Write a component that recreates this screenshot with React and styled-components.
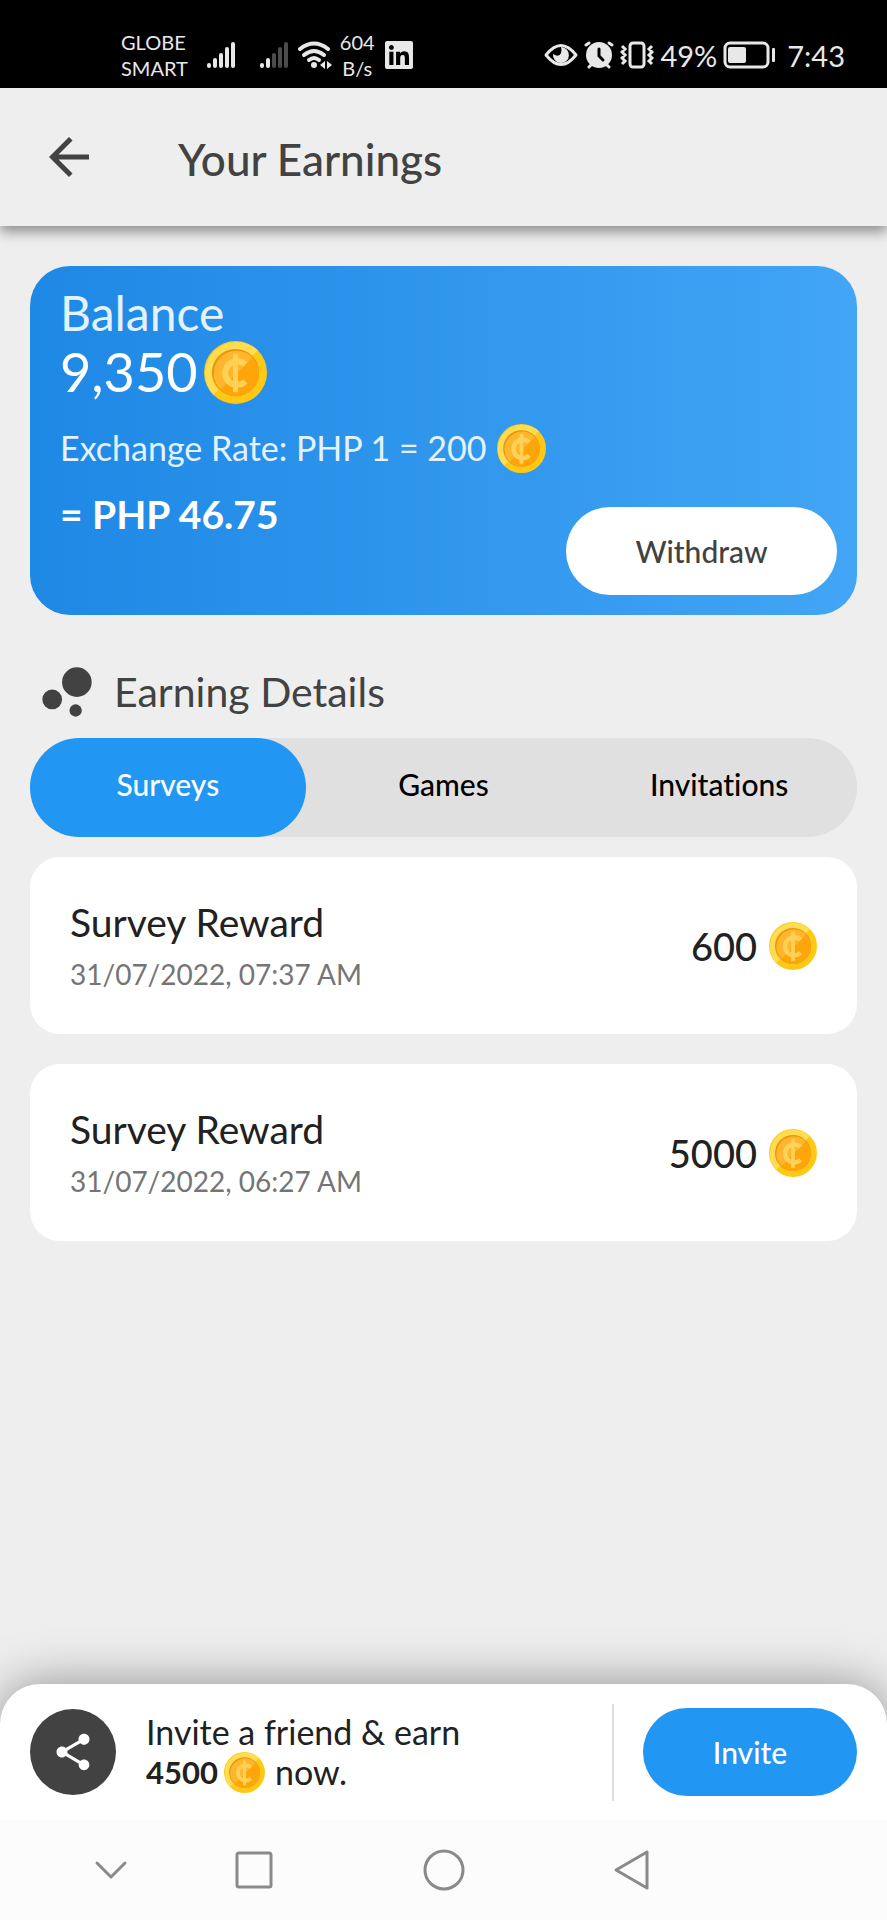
import React, { useState } from 'react';
import styled, { createGlobalStyle } from 'styled-components';
import { FaLinkedin } from 'react-icons/fa';
import { MdArrowBack, MdBubbleChart, MdShare } from 'react-icons/md';

const rewards = {
    Surveys: [
        { id: 1, title: 'Survey Reward', date: '31/07/2022, 07:37 AM', coins: 600 },
        { id: 2, title: 'Survey Reward', date: '31/07/2022, 06:27 AM', coins: 5000 },
    ],
    Games: [],
    Invitations: [],
};

const Coin = ({ size }) => (
    <CoinStyle $size={size} viewBox="0 0 64 64" aria-label="coins" role="img">
        <circle cx="32" cy="32" r="32" fill="#fdc916" />
        <path d="M9.4 54.6 A32 32 0 0 1 54.6 9.4 Z" fill="#ffdc52" />
        <circle cx="32" cy="32" r="24" fill="#e8960c" />
        <circle cx="33" cy="33" r="23" fill="#fda50a" />
        <path d="M16.7 49.3 A23 23 0 0 1 49.3 16.7 Z" fill="#ffb52e" />
        <path d="M42 24 A12 12 0 1 0 42 41" fill="none" stroke="#ffd257" strokeWidth="6" />
        <path d="M32 13 V52" fill="none" stroke="#ffd257" strokeWidth="5" />
    </CoinStyle>
);

const Signal = ({ level }) => (
    <svg width="30" height="28" viewBox="0 0 30 28" aria-hidden="true">
        {[5, 10, 15, 21, 26].map((h, i) => (
            <rect key={h} x={i * 6} y={27 - h} width="4" height={h} rx="2" fill={i < level ? '#e8e8e8' : '#4c4c4c'} />
        ))}
    </svg>
);

const Wifi = () => (
    <svg width="34" height="28" viewBox="0 0 34 28" fill="none" stroke="#e8e8e8" strokeWidth="4" aria-hidden="true">
        <path d="M2 8 Q16 -3 30 8" strokeLinecap="round" />
        <path d="M6 14 Q16 6 26 14" strokeLinecap="round" />
        <path d="M11 19 Q16 15 21 19" strokeLinecap="round" />
        <circle cx="16" cy="24" r="3" fill="#e8e8e8" stroke="none" />
        <path d="M27 20 v8 l-5 -4 z M29 20 v8 l5 -4 z" fill="#e8e8e8" stroke="none" />
    </svg>
);

const Eye = () => (
    <svg width="34" height="24" viewBox="0 0 34 24" aria-hidden="true">
        <path d="M2 12 Q17 -7 32 12 Q17 31 2 12 Z" fill="none" stroke="#e8e8e8" strokeWidth="3" strokeLinejoin="round" />
        <path d="M17 4 A8 8 0 1 1 9 11 Q15 15 17 10 Q18 7 17 4 Z" fill="#e8e8e8" />
    </svg>
);

const Alarm = () => (
    <svg width="30" height="28" viewBox="0 0 30 28" fill="none" stroke="#e8e8e8" strokeWidth="3" strokeLinecap="round" aria-hidden="true">
        <circle cx="15" cy="14" r="13" fill="#e8e8e8" stroke="none" />
        <path d="M2 4 L5 2 M28 4 L25 2 M5 26 L8 23 M25 26 L22 23" />
        <path d="M15 8 V15 L19 19" stroke="#000" />
    </svg>
);

const Vibrate = () => (
    <svg width="34" height="28" viewBox="0 0 34 28" fill="none" stroke="#e8e8e8" strokeWidth="3" aria-hidden="true">
        <rect x="10" y="2" width="14" height="24" rx="3" />
        <path d="M2 5 l3 3 l-3 3 l3 3 l-3 3 l3 3 l-3 3 M32 5 l-3 3 l3 3 l-3 3 l3 3 l-3 3 l3 3" />
    </svg>
);

const Battery = () => (
    <svg width="52" height="28" viewBox="0 0 52 28" aria-hidden="true">
        <rect x="2" y="2" width="43" height="24" rx="5" fill="none" stroke="#e8e8e8" strokeWidth="3" />
        <rect x="5" y="6" width="18" height="16" rx="2" fill="#e8e8e8" />
        <rect x="49" y="7" width="3" height="14" rx="1" fill="#e8e8e8" />
    </svg>
);

const Reward = ({ title, date, coins }) => (
    <RewardStyle>
        <div>
            <h3 className="reward__title">{title}</h3>
            <p className="reward__date">{date}</p>
        </div>
        <p className="reward__coins">
            {coins}
            <Coin size={48} />
        </p>
    </RewardStyle>
);

const App = () => {
    const [tab, setTab] = useState('Surveys');

    return (
        <Page>
            <GlobalStyle />
            <StatusBar>
                <StatusGroup $gap={8}>
                    <Small>GLOBE<br />SMART</Small>
                    <StatusIcons>
                        <Signal level={5} />
                        <Signal level={2} />
                    </StatusIcons>
                    <Wifi />
                    <Small $center>604<br />B/s</Small>
                    <FaLinkedin size={32} />
                </StatusGroup>
                <StatusGroup $gap={6}>
                    <Eye />
                    <Alarm />
                    <Vibrate />
                    <span>49%</span>
                    <Battery />
                    <Clock>7:43</Clock>
                </StatusGroup>
            </StatusBar>

            <Header>
                <BackButton type="button" aria-label="Back"><MdArrowBack size={60} /></BackButton>
                <h1>Your Earnings</h1>
            </Header>

            <Main>
                <BalanceCard>
                    <BalanceLabel>Balance</BalanceLabel>
                    <BalanceAmount>9,350<Coin size={63} /></BalanceAmount>
                    <Rate>Exchange Rate: PHP 1 = 200<Coin size={49} /></Rate>
                    <BalanceFooter>
                        <strong>= PHP 46.75</strong>
                        <PillButton type="button" $width={271}>Withdraw</PillButton>
                    </BalanceFooter>
                </BalanceCard>

                <SectionTitle>
                    <MdBubbleChart size={74} />
                    Earning Details
                </SectionTitle>

                <Tabs role="tablist">
                    {Object.keys(rewards).map((name) => (
                        <Tab key={name} type="button" role="tab" aria-selected={tab === name} $active={tab === name} onClick={() => setTab(name)}>
                            {name}
                        </Tab>
                    ))}
                </Tabs>

                <RewardList>
                    {rewards[tab].map((reward) => <Reward key={reward.id} {...reward} />)}
                </RewardList>
            </Main>

            <InviteBar>
                <ShareBadge><MdShare size={44} /></ShareBadge>
                <InviteText>
                    Invite a friend &amp; earn
                    <span><strong>4500</strong><Coin size={41} /><em>now.</em></span>
                </InviteText>
                <PillButton type="button" $primary $width={214}>Invite</PillButton>
            </InviteBar>

            <NavBar>
                <NavButton type="button" aria-label="Hide keyboard">
                    <svg width="42" height="42" viewBox="0 0 42 42"><path d="M7 14 L21 28 L35 14" /></svg>
                </NavButton>
                <NavButton type="button" aria-label="Recent apps">
                    <svg width="42" height="42" viewBox="0 0 42 42"><rect x="4" y="4" width="34" height="34" rx="2" /></svg>
                </NavButton>
                <NavButton type="button" aria-label="Home">
                    <svg width="42" height="42" viewBox="0 0 42 42"><circle cx="21" cy="21" r="19" /></svg>
                </NavButton>
                <NavButton type="button" aria-label="Back">
                    <svg width="42" height="42" viewBox="0 0 42 42"><path d="M34 3 V39 L3 21 Z" /></svg>
                </NavButton>
            </NavBar>
        </Page>
    );
};

const GlobalStyle = createGlobalStyle`
* {
    box-sizing: border-box;
}
body {
    margin: 0;
    background: #eee;
    font-family: Lato, "Liberation Sans", sans-serif;
    font-variant-ligatures: none;
}
h1, h2, h3, p {
    margin: 0;
    font-weight: 400;
}
button {
    border: 0;
    font-family: inherit;
    font-variant-ligatures: none;
    cursor: pointer;
}
svg {
    flex-shrink: 0;
}
`

const CoinStyle = styled.svg`
width: ${(props) => props.$size}px;
height: ${(props) => props.$size}px;
`

const Page = styled.div`
min-height: 100vh;
display: flex;
flex-direction: column;
background: #eee;
color: #212121;
`

const StatusBar = styled.div`
height: 88px;
padding: 22px 42px 0 121px;
display: flex;
justify-content: space-between;
align-items: center;
background: #000;
color: #e8e8e8;
font-size: 29px;
`

const StatusGroup = styled.div`
display: flex;
align-items: center;
gap: ${(props) => props.$gap}px;
`

const StatusIcons = styled.div`
display: flex;
gap: 23px;
margin-left: 11px;
`

const Small = styled.span`
font-size: 20px;
line-height: 26px;
text-align: ${(props) => (props.$center ? 'center' : 'left')};
`

const Clock = styled.span`
margin-left: 6px;
`

const Header = styled.header`
height: 138px;
padding: 0 39px;
display: flex;
align-items: center;
gap: 79px;
background: #eee;
color: #424242;
box-shadow: 0 6px 12px rgba(0, 0, 0, 0.4);

h1 {
    padding-top: 4px;
    font-size: 44px;
    font-weight: 500;
}
`

const BackButton = styled.button`
display: flex;
padding: 0;
background: none;
color: inherit;
`

const Main = styled.main`
flex: 1;
padding: 40px 30px;
`

const BalanceCard = styled.section`
padding: 20px 20px 20px 30px;
border-radius: 40px;
background: linear-gradient(90deg, #1e88e5, #42a5f5);
color: #fff;
`

const BalanceLabel = styled.h2`
font-size: 48px;
line-height: 54px;
color: #e3f2fd;
`

const BalanceAmount = styled.p`
display: flex;
align-items: center;
gap: 6px;
font-size: 54px;
line-height: 64px;
`

const Rate = styled.p`
display: flex;
align-items: center;
gap: 10px;
margin-top: 19px;
font-size: 34px;
line-height: 50px;
color: #e3f2fd;
`

const BalanceFooter = styled.div`
display: flex;
justify-content: space-between;
margin-top: 34px;

strong {
    font-size: 39px;
    line-height: 14px;
}
`

const PillButton = styled.button`
width: ${(props) => props.$width}px;
height: 88px;
border-radius: 44px;
background: ${(props) => (props.$primary ? '#2196f3' : '#fff')};
color: ${(props) => (props.$primary ? '#fff' : '#424242')};
font-size: 30px;
font-weight: 500;
`

const SectionTitle = styled.h2`
display: flex;
align-items: center;
gap: 10px;
height: 123px;
padding-top: 30px;
font-size: 41px;
color: #424242;
`

const Tabs = styled.div`
display: grid;
grid-template-columns: repeat(3, 1fr);
border-radius: 50px;
background: #e0e0e0;
`

const Tab = styled.button`
height: 99px;
padding: 0 0 8px;
border-radius: 50px;
background: ${(props) => (props.$active ? '#2196f3' : 'transparent')};
color: ${(props) => (props.$active ? '#fff' : '#000')};
font-size: 30px;
font-weight: 500;
`

const RewardList = styled.div`
display: flex;
flex-direction: column;
gap: 30px;
margin-top: 20px;
`

const RewardStyle = styled.article`
height: 177px;
padding: 0 40px;
display: flex;
justify-content: space-between;
align-items: center;
border-radius: 30px;
background: #fff;

.reward__title {
    padding-top: 4px;
    font-size: 39px;
    line-height: 52px;
}
.reward__date {
    font-size: 28px;
    line-height: 52px;
    color: #757575;
}
.reward__coins {
    display: flex;
    align-items: center;
    gap: 12px;
    font-size: 38px;
    font-weight: 500;
}
`

const InviteBar = styled.footer`
height: 136px;
padding: 0 30px;
display: flex;
align-items: center;
border-radius: 40px 40px 0 0;
background: #fff;
box-shadow: 0 0 50px rgba(0, 0, 0, 0.4);
`

const ShareBadge = styled.div`
width: 86px;
height: 86px;
display: flex;
justify-content: center;
align-items: center;
border-radius: 50%;
background: #424242;
color: #fff;
`

const InviteText = styled.p`
flex: 1;
margin: 0 29px 0 30px;
border-right: 2px solid #e0e0e0;
padding: 8px 0;
font-size: 34px;
line-height: 40px;

span {
    display: flex;
    align-items: center;
    gap: 6px;
}
strong {
    font-size: 31px;
}
em {
    margin-left: 4px;
    font-style: normal;
}
`

const NavBar = styled.nav`
height: 100px;
display: grid;
grid-template-columns: 1fr repeat(3, 190px) 1fr;
align-items: center;
background: #fcfcfc;
z-index: 1;
`

const NavButton = styled.button`
display: flex;
justify-content: center;
justify-self: center;
width: 96px;
padding: 0;
background: none;

&:first-child {
    justify-self: end;
}
svg {
    fill: none;
    stroke: #8a8a8a;
    stroke-width: 3;
    stroke-linejoin: round;
    stroke-linecap: round;
}
`

export default App;
